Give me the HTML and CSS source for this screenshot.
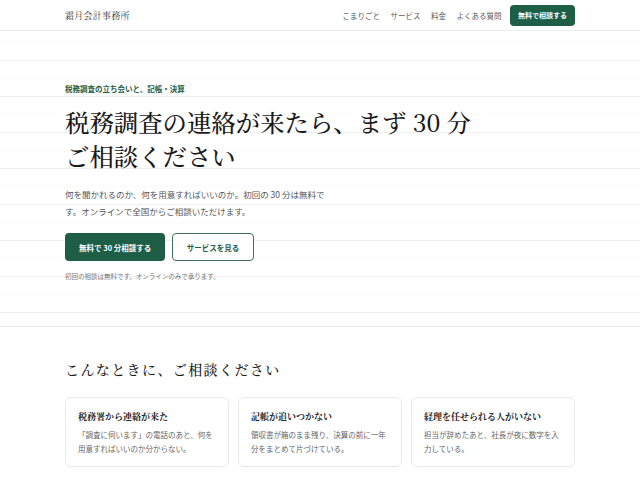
FILE: index.html
```html
<!DOCTYPE html>
<html lang="ja">
<head>
<meta charset="utf-8">
<title>霜月会計事務所</title>
<link rel="stylesheet" href="styles.css">
</head>
<body>
<header class="site-header">
  <div class="container header-inner">
    <div class="logo">霜月会計事務所</div>
    <nav class="nav">
      <a class="nav-link" href="#">こまりごと</a>
      <a class="nav-link" href="#">サービス</a>
      <a class="nav-link" href="#">料金</a>
      <a class="nav-link" href="#">よくある質問</a>
      <a class="nav-cta" href="#">無料で相談する</a>
    </nav>
  </div>
</header>
<section class="hero">
  <div class="container">
    <p class="eyebrow">税務調査の立ち会いと、記帳・決算</p>
    <h1 class="hero-title">税務調査の連絡が来たら、まず 30 分<br>ご相談ください</h1>
    <p class="hero-lead">何を聞かれるのか、何を用意すればいいのか。初回の 30 分は無料です。オンラインで全国からご相談いただけます。</p>
    <div class="hero-actions">
      <a class="btn btn-primary" href="#">無料で 30 分相談する</a>
      <a class="btn btn-outline" href="#">サービスを見る</a>
    </div>
    <p class="hero-note">初回の相談は無料です。オンラインのみで承ります。</p>
  </div>
</section>
<section class="troubles">
  <div class="container">
    <h2 class="section-title">こんなときに、ご相談ください</h2>
    <div class="cards">
      <div class="card">
        <h3 class="card-title">税務署から連絡が来た</h3>
        <p class="card-text">「調査に伺います」の電話のあと、何を用意すればいいのか分からない。</p>
      </div>
      <div class="card">
        <h3 class="card-title">記帳が追いつかない</h3>
        <p class="card-text">領収書が箱のまま残り、決算の前に一年分をまとめて片づけている。</p>
      </div>
      <div class="card">
        <h3 class="card-title">経理を任せられる人がいない</h3>
        <p class="card-text">担当が辞めたあと、社長が夜に数字を入力している。</p>
      </div>
    </div>
  </div>
</section>
</body>
</html>
```
FILE: styles.css
```css
* { box-sizing: border-box; }
html, body { margin: 0; padding: 0; }
body {
  font-family: "Noto Sans CJK JP", "Noto Sans", sans-serif;
  color: #222;
  background: #fff;
}
a { text-decoration: none; color: inherit; }
p, h1, h2, h3 { margin: 0; }

.container {
  width: 510px;
  margin: 0 auto;
}

.site-header {
  height: 31px;
  border-bottom: 1px solid #ececec;
}
.header-inner {
  height: 30px;
  display: flex;
  align-items: center;
  justify-content: space-between;
}
.logo {
  font-family: "Noto Serif CJK JP", "Liberation Serif", serif;
  font-size: 9px;
  letter-spacing: 0.03em;
  color: #333;
}
.nav {
  display: flex;
  align-items: center;
  gap: 10.5px;
}
.nav-link {
  font-size: 7.5px;
  color: #5c5c5c;
}
.nav-cta {
  margin-left: -2px;
  height: 21px;
  padding: 0 8px;
  display: flex;
  align-items: center;
  background: #1e5e46;
  color: #fff;
  font-size: 7px;
  font-weight: 700;
  border-radius: 4px;
}

.hero {
  padding: 52px 0 44px;
  border-bottom: 1px solid #ececec;
  background-image: repeating-linear-gradient(
    to bottom,
    transparent 0, transparent 11px,
    #fbfbfb 11px, #fbfbfb 12px,
    transparent 12px, transparent 29px,
    #efefef 29px, #efefef 30px,
    transparent 30px, transparent 36px
  );
}
.eyebrow {
  font-size: 7.5px;
  line-height: 1.5;
  font-weight: 700;
  color: #1e5e46;
}
.hero-title {
  margin-top: 11px;
  font-family: "Noto Serif CJK JP", "Liberation Serif", serif;
  font-size: 24.4px;
  line-height: 33.6px;
  font-weight: 500;
  color: #1a1a1a;
}
.hero-lead {
  margin-top: 14px;
  max-width: 263px;
  font-size: 8.5px;
  line-height: 2;
  color: #555;
}
.hero-actions {
  margin-top: 12.5px;
  display: flex;
  gap: 6.5px;
}
.btn {
  height: 28.5px;
  padding: 0 14px;
  display: flex;
  align-items: center;
  font-size: 7.5px;
  font-weight: 700;
  border-radius: 4px;
}
.btn-primary {
  background: #1e5e46;
  color: #fff;
}
.btn-outline {
  background: #fff;
  border: 1px solid #3f6e5b;
  color: #1e5e46;
}
.hero-note {
  margin-top: 10.5px;
  font-size: 6.5px;
  line-height: 1.5;
  color: #777;
}

.troubles {
  padding: 32.5px 0 40px;
}
.section-title {
  font-family: "Noto Serif CJK JP", "Liberation Serif", serif;
  font-size: 14px;
  line-height: 1.5;
  font-weight: 500;
  letter-spacing: 0.1em;
  color: #1a1a1a;
}
.cards {
  margin-top: 16.5px;
  display: grid;
  grid-template-columns: repeat(3, 1fr);
  gap: 9px;
}
.card {
  height: 70px;
  padding: 12px 12px 10px;
  border: 1px solid #ebebeb;
  border-radius: 6px;
  background: #fff;
  box-shadow: 0 1px 2px rgba(0,0,0,0.02);
}
.card-title {
  font-family: "Noto Serif CJK JP", "Liberation Serif", serif;
  font-size: 9px;
  line-height: 14px;
  font-weight: 700;
  color: #222;
}
.card-text {
  margin-top: 4px;
  font-size: 7.5px;
  line-height: 14px;
  color: #666;
}
```
